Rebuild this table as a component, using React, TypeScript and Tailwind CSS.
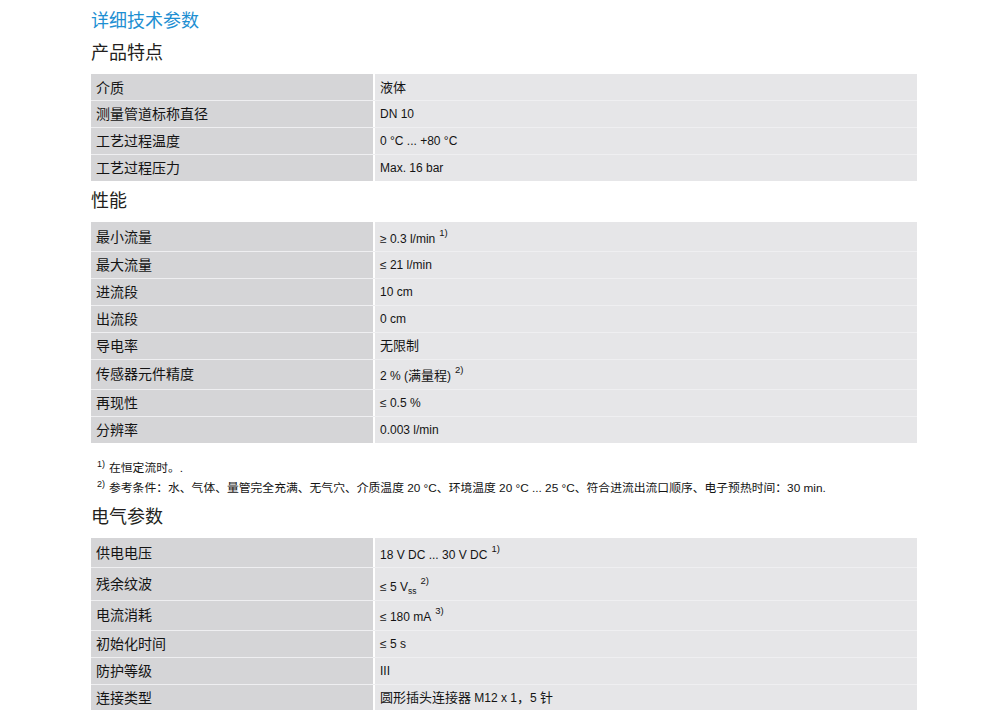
import React from "react";

type Row = { k: string; v: React.ReactNode; h: string; lp: string; rp: string };

const Cn = ({ children }: { children: React.ReactNode }) => <span className="text-[13px]">{children}</span>;
const Sup = ({ children }: { children: React.ReactNode }) => (
  <span className="relative -top-[7px] ml-[4px] text-[9.5px]">{children}</span>
);
const Sub = ({ children }: { children: React.ReactNode }) => (
  <span className="relative top-[3px] text-[8.5px]">{children}</span>
);

const features: Row[] = [
  { k: "介质", v: <Cn>液体</Cn>, h: "h-[26px]", lp: "pt-[5px]", rp: "pt-[6px]" },
  { k: "测量管道标称直径", v: "DN 10", h: "h-[27px]", lp: "pt-[4px]", rp: "pt-[5px]" },
  { k: "工艺过程温度", v: "0 °C ... +80 °C", h: "h-[27px]", lp: "pt-[4px]", rp: "pt-[5px]" },
  { k: "工艺过程压力", v: "Max. 16 bar", h: "h-[27px]", lp: "pt-[4px]", rp: "pt-[5px]" },
];

const performance: Row[] = [
  { k: "最小流量", v: <>≥ 0.3 l/min<Sup>1)</Sup></>, h: "h-[29px]", lp: "pt-[6px]", rp: "pt-[9px]" },
  { k: "最大流量", v: "≤ 21 l/min", h: "h-[27px]", lp: "pt-[4px]", rp: "pt-[5px]" },
  { k: "进流段", v: "10 cm", h: "h-[27px]", lp: "pt-[4px]", rp: "pt-[5px]" },
  { k: "出流段", v: "0 cm", h: "h-[27px]", lp: "pt-[4px]", rp: "pt-[5px]" },
  { k: "导电率", v: <Cn>无限制</Cn>, h: "h-[27px]", lp: "pt-[4px]", rp: "pt-[5px]" },
  { k: "传感器元件精度", v: <>2 % (<Cn>满量程</Cn>)<Sup>2)</Sup></>, h: "h-[30px]", lp: "pt-[5px]", rp: "pt-[8px]" },
  { k: "再现性", v: "≤ 0.5 %", h: "h-[27px]", lp: "pt-[4px]", rp: "pt-[5px]" },
  { k: "分辨率", v: "0.003 l/min", h: "h-[27px]", lp: "pt-[4px]", rp: "pt-[5px]" },
];

const electrical: Row[] = [
  { k: "供电电压", v: <>18 V DC ... 30 V DC<Sup>1)</Sup></>, h: "h-[29px]", lp: "pt-[6px]", rp: "pt-[9px]" },
  { k: "残余纹波", v: <>≤ 5 V<Sub>ss</Sub><Sup>2)</Sup></>, h: "h-[33px]", lp: "pt-[7px]", rp: "pt-[11px]" },
  { k: "电流消耗", v: <>≤ 180 mA<Sup>3)</Sup></>, h: "h-[30px]", lp: "pt-[5px]", rp: "pt-[8px]" },
  { k: "初始化时间", v: "≤ 5 s", h: "h-[27px]", lp: "pt-[4px]", rp: "pt-[5px]" },
  { k: "防护等级", v: "III", h: "h-[27px]", lp: "pt-[4px]", rp: "pt-[5px]" },
  {
    k: "连接类型",
    v: <><Cn>圆形插头连接器</Cn> M12 x 1<Cn>，</Cn>5 <Cn>针</Cn></>,
    h: "h-[26px]",
    lp: "pt-[4px]",
    rp: "pt-[5px]",
  },
];

function SpecTable({ rows }: { rows: Row[] }) {
  return (
    <div className="mt-[9px] w-[826px]">
      {rows.map((r, i) => (
        <div key={i} className={`flex gap-[2px] ${r.h} ${i > 0 ? "border-t border-[#efeff1]" : ""}`}>
          <div className={`w-[282px] bg-[#d5d5d7] pl-[5px] text-[14px] leading-[18px] text-[#141414] ${r.lp}`}>
            {r.k}
          </div>
          <div className={`flex-1 bg-[#e6e6e8] pl-[5px] text-[12px] leading-[16px] text-[#141414] ${r.rp}`}>{r.v}</div>
        </div>
      ))}
    </div>
  );
}

function Heading({ children, className = "" }: { children: React.ReactNode; className?: string }) {
  return <h2 className={`text-[18px] leading-[24px] text-[#231f20] ${className}`}>{children}</h2>;
}

function Note({ mark, children }: { mark: string; children: React.ReactNode }) {
  return (
    <div className="flex">
      <span className="relative -top-[4px] w-[18px] shrink-0 pl-[6px] text-[9px]">{mark}</span>
      <span>{children}</span>
    </div>
  );
}

export default function App() {
  return (
    <div className="min-h-screen bg-white pl-[91px] pt-[9px] font-['Liberation_Sans','Noto_Sans_CJK_SC',sans-serif]">
      <h1 className="text-[18px] leading-[24px] text-[#1e8fd2]">详细技术参数</h1>

      <Heading className="mt-[8px]">产品特点</Heading>
      <SpecTable rows={features} />

      <Heading className="mt-[8px]">性能</Heading>
      <SpecTable rows={performance} />

      <div className="mt-[15px] text-[11.8px] leading-[20px] text-[#141414]">
        <Note mark="1)">在恒定流时。.</Note>
        <Note mark="2)">
          参考条件：水、气体、量管完全充满、无气穴、介质温度 20 °C、环境温度 20 °C ... 25 °C、符合进流出流口顺序、电子预热时间：30 min.
        </Note>
      </div>

      <Heading className="mt-[7px]">电气参数</Heading>
      <SpecTable rows={electrical} />
    </div>
  );
}
